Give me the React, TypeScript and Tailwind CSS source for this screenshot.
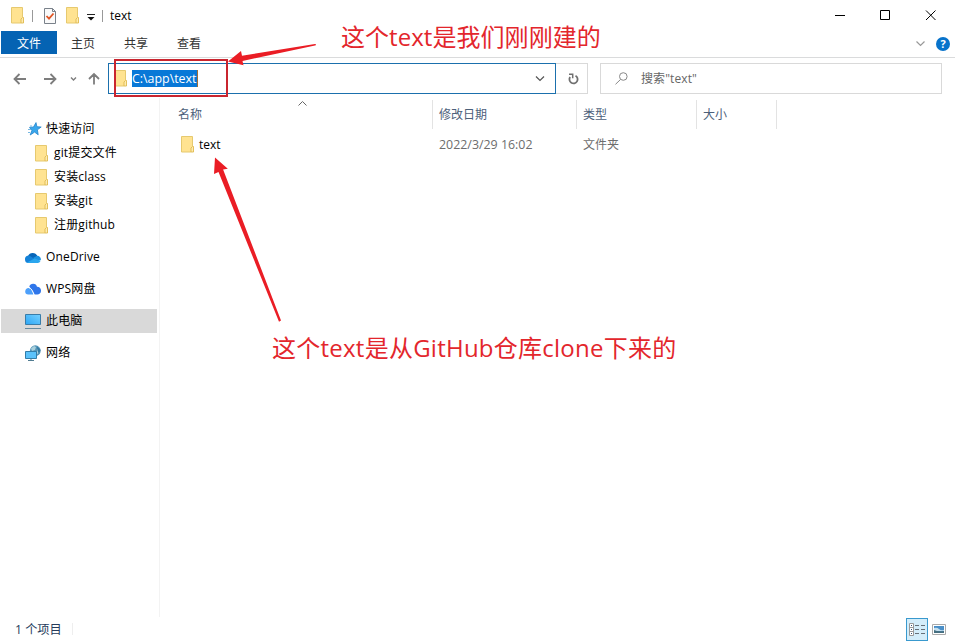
import type { ReactNode } from "react";

const uiFont = "font-['Open_Sans','Noto_Sans_CJK_SC',sans-serif]";

function Folder() {
  return (
    <svg width="14" height="17" viewBox="0 0 14 17" className="block shrink-0">
      <path d="M1.500.5h11v10h1v5.500h-12z" fill="#ffe391" />
      <path d="M12.500 10V.5h-11V16H11" fill="none" stroke="#e6c96f" />
      <path d="M11 16v-4l1.500-1.500h1V16z" fill="#ffebb0" stroke="#dfba50" strokeWidth=".9" />
    </svg>
  );
}

function Star() {
  return (
    <svg width="15" height="14" viewBox="0 0 15 14" className="block">
      <path d="M9 .6 9.900 4.700l4.300.3-3.800 2.800.8 5-3.600-2.700L3.200 13l1.700-4.500L2.500 5.400l4-.4z" fill="#39a7ec" stroke="#2384cb" strokeWidth=".8" />
      <path d="M3 4H5M1 7.500h3M1 10.500h2" stroke="#76b8e2" strokeWidth="1" />
    </svg>
  );
}

function OneDrive() {
  return (
    <svg width="16" height="11" viewBox="0 0 16 11" className="block">
      <path d="M3 4.200A5 5 0 0 1 12.300 4L9 7 2 8z" fill="#0765b8" />
      <path d="M0 7.500A3.500 3.500 0 0 1 5.500 4.200L11 8 3.500 11A3.500 3.500 0 0 1 0 7.500z" fill="#1482d8" />
      <path d="M8 6l4-2.200A3.600 3.600 0 0 1 15.800 8L12 9z" fill="#1a90e0" />
      <path d="M2 10.600 9.500 6.500 15.600 8.800A3 3 0 0 1 13 11H3.500z" fill="#2aa6ee" />
    </svg>
  );
}

function Wps() {
  return (
    <svg width="16" height="12" viewBox="0 0 16 12" className="block">
      <path d="M4.300 3.500A4 4 0 0 1 12 3.800 3.800 3.800 0 0 1 16 7.700 3.700 3.700 0 0 1 12 11.500H9.500z" fill="#2f76ea" />
      <path d="M.2 8.500A3.700 3.700 0 0 1 3.700 5C6 5 7 7 8.500 11.500H3.200A3 3 0 0 1 .2 8.500z" fill="#4da0fb" />
      <path d="M3.600 4.600C6.500 5 7.500 8 9.200 11.700" stroke="#fff" strokeWidth="1" fill="none" />
    </svg>
  );
}

function Computer() {
  return (
    <svg width="16" height="15" viewBox="0 0 16 15" className="block">
      <defs>
        <linearGradient id="screen" x1="0" y1="1" x2="1" y2="0">
          <stop stopColor="#2ba6f5" />
          <stop offset="1" stopColor="#75d0ff" />
        </linearGradient>
      </defs>
      <path d="M.5.5h15v10H.5z" fill="url(#screen)" stroke="#397ca8" />
      <path d="M0 14.500h16" stroke="#668a9f" />
    </svg>
  );
}

function Network() {
  return (
    <svg width="16" height="16" viewBox="0 0 16 16" className="block">
      <circle cx="10.300" cy="5.700" r="5.400" fill="#5595b8" />
      <path d="M6 3.500 9 1l2 1-1 3-3 1zM12 4l2.500 1v3L12 9z" fill="#a9d0dc" />
      <path d="M12 1.200 15.500 5 14 9.500l-1.500-4z" fill="#327aa3" />
      <path d="M.5 6.500h11v7H.5z" fill="#5bc2fb" stroke="#327da9" />
      <path d="M6 13.500v2M3 15.500h6" stroke="#517c91" />
    </svg>
  );
}

function NavRow({ icon, label, indent = false, active = false }: { icon: ReactNode; label: string; indent?: boolean; active?: boolean }) {
  return (
    <div className={`ml-px flex h-6 w-[156px] items-center ${indent ? "pl-[33px]" : "pl-6"} ${active ? "bg-[#d9d9d9]" : ""}`}>
      <span className={`flex shrink-0 ${indent ? "w-[20px]" : "w-[21px]"}`}>{icon}</span>
      <span className="whitespace-nowrap leading-6 tracking-[0.15px]">{label}</span>
    </div>
  );
}

function Chevron({ color = "#555", size = 9 }: { color?: string; size?: number }) {
  return (
    <svg width={size} height="6" viewBox="0 0 9 6" className="block">
      <path d="M.5.5l4 4 4-4" fill="none" stroke={color} strokeWidth="1.200" />
    </svg>
  );
}

function TitleBar() {
  return (
    <header className="flex h-[31px] items-center justify-between">
      <div className="flex h-full items-center pl-[10px]">
        <Folder />
        <span className="ml-[8px] mr-[11px] h-3 w-px bg-[#999]" />
        <svg width="12" height="16" viewBox="0 0 12 16">
          <path d="M.5.5h8l3 3v12H.5z" fill="#fafafa" stroke="#79818a" />
          <path d="M8.500.5v3h3" fill="none" stroke="#79818a" />
          <path d="M2.500 8 5 10.700 9.500 5.500" fill="none" stroke="#df5525" strokeWidth="1.800" />
        </svg>
        <span className="ml-[9px]"><Folder /></span>
        <svg width="8" height="7" viewBox="0 0 8 7" className="ml-[8px] mt-[3px]">
          <path d="M0 .5h8" stroke="#222" />
          <path d="M.5 3h7L4 6.500z" fill="#111" />
        </svg>
        <span className="ml-[7px] mr-[7px] h-3 w-px bg-[#999]" />
        <span className="leading-[30px]">text</span>
      </div>
      <svg width="104" height="31" viewBox="0 0 104 31" fill="none" stroke="#000" className="mr-[16px]">
        <path d="M0 15.500h10M45.500 10.500h9v9h-9zM91 10.500l9.500 9.500m0-9.500L91 20" />
      </svg>
    </header>
  );
}

function Ribbon() {
  return (
    <nav className="flex h-[27px] items-start border-b border-[#dadbdc] text-[#333]">
      <span className="ml-px h-[23px] w-14 bg-[#0563b3] text-center leading-[25px] text-white">文件</span>
      <span className="ml-[14px] leading-[25px]">主页</span>
      <span className="ml-[29px] leading-[25px]">共享</span>
      <span className="ml-[29px] leading-[25px]">查看</span>
      <div className="ml-auto flex h-[26px] items-center pr-[5px]">
        <Chevron color="#999" />
        <svg width="14" height="14" viewBox="0 0 14 14" className="ml-[11px]">
          <circle cx="7" cy="7" r="7" fill="#0873cb" />
          <text x="7" y="11" textAnchor="middle" fontSize="11" fontWeight="700" fill="#fff">?</text>
        </svg>
      </div>
    </nav>
  );
}

function AddressRow() {
  return (
    <div className="flex h-[40px] items-start pt-[5px]">
      <svg width="108" height="31" viewBox="0 0 108 31" fill="none" stroke="#7d7d7d" strokeWidth="1.800" className="shrink-0">
        <path d="M26 16H14.500m5-5-5 5 5 5M44 16h11.500m-5-5 5 5-5 5M94 21.500V11m-5 5 5-5 5 5" />
        <path d="M71 14.500l2.500 2.500 2.500-2.500" strokeWidth="1.400" />
      </svg>
      <div className="flex h-[31px] w-[448px] items-center border border-[#1b70ad] pl-[4px] pr-[10px]">
        <Folder />
        <span className="ml-[5px] h-[17px] w-[66px] whitespace-nowrap border-r border-[#a06e35] bg-[#0878d7] text-[12.400px] leading-[18px] text-white">C:\app\text</span>
        <span className="ml-auto"><Chevron size={10} /></span>
      </div>
      <div className="flex h-[31px] w-8 items-center justify-center border border-l-0 border-[#d9d9d9] pl-[3px]">
        <svg width="11" height="12" viewBox="0 0 11 12" fill="none" stroke="#707070" strokeWidth="1.800">
          <path d="M7.500 2.700A4.100 4.100 0 1 1 2.100 4" />
          <path d="M1 1.300H4.700V5.300" strokeWidth="1.500" />
        </svg>
      </div>
      <div className="ml-3 flex h-[31px] w-[342px] items-center border border-[#d9d9d9] pl-[14px] text-[#666]">
        <svg width="13" height="13" viewBox="0 0 13 13" fill="none" stroke="#888">
          <circle cx="8.300" cy="4.500" r="3.800" />
          <path d="M5.500 7.500.5 12.300" />
        </svg>
        <span className="ml-[13px] tracking-[0.100px]">搜索"text"</span>
      </div>
    </div>
  );
}

function Sidebar() {
  return (
    <aside className="h-full w-40 shrink-0 border-r border-[#f3f3f3] pt-[19px]">
      <NavRow icon={<span className="ml-[2px]"><Star /></span>} label="快速访问" />
      <NavRow indent icon={<Folder />} label="git提交文件" />
      <NavRow indent icon={<Folder />} label="安装class" />
      <NavRow indent icon={<Folder />} label="安装git" />
      <NavRow indent icon={<Folder />} label="注册github" />
      <div className="mt-2 flex flex-col gap-2">
        <NavRow icon={<OneDrive />} label="OneDrive" />
        <NavRow icon={<Wps />} label="WPS网盘" />
        <NavRow active icon={<Computer />} label="此电脑" />
        <NavRow icon={<Network />} label="网络" />
      </div>
    </aside>
  );
}

function FileList() {
  return (
    <main className="min-w-0 flex-1">
      <div className="flex pt-[2px] leading-[29px] text-[#4c607a]">
        <div className="relative h-[29px] w-[273px] border-r border-[#e3e3e3] pl-[18px]">
          名称
          <svg width="9" height="5" viewBox="0 0 9 5" className="absolute left-[138px] top-px">
            <path d="M.5 4.500l4-4 4 4" fill="none" stroke="#666" />
          </svg>
        </div>
        <div className="w-36 border-r border-[#e3e3e3] pl-[6px]">修改日期</div>
        <div className="w-[120px] border-r border-[#e3e3e3] pl-[6px]">类型</div>
        <div className="w-20 border-r border-[#e3e3e3] pl-[6px]">大小</div>
      </div>
      <div className="flex h-[31px] items-center pl-5 text-[#6d6d6d]">
        <Folder />
        <span className="ml-[5px] w-[240px] text-black">text</span>
        <span className="w-36 pt-px text-[12.400px]">2022/3/29 16:02</span>
        <span className="pt-px">文件夹</span>
      </div>
    </main>
  );
}

function StatusBar() {
  return (
    <footer className="flex h-[25px] items-center justify-between text-[#253b5b]">
      <div className="flex items-center pl-[15px]">
        <span className="w-[57px] whitespace-pre pt-px text-[12.200px]">1 个项目</span>
        <span className="h-3 w-px bg-[#eee]" />
      </div>
      <div className="flex items-center pr-[9px]">
        <span className="flex h-[23px] w-[22px] items-center justify-center border border-[#3999ce] bg-[#d3edfa]">
          <svg width="16" height="13" viewBox="0 0 16 13" fill="none">
            <path d="M.5.5h4v12h-4zM.5 4.500h4M.5 8.500h4" stroke="#999" fill="#fff" />
            <path d="M2 2.500h1M2 6.500h1M2 10.500h1" stroke="#357" />
            <path d="M6 2.500h4m2 0h4M6 6.500h4m2 0h4M6 10.500h4m2 0h4" stroke="#667078" />
          </svg>
        </span>
        <svg width="14" height="11" viewBox="0 0 14 11" className="ml-1">
          <path d="M.5.5h13v10H.5z" fill="#fff" stroke="#aaa" />
          <path d="M2 2h10v7H2z" fill="#4a8fc8" />
          <path d="M2 4q3-1 5 1t5 1v1H2z" fill="#c4e0f0" />
          <path d="M2 6q4 2 10 1v2H2z" fill="#456f80" />
        </svg>
      </div>
    </footer>
  );
}

export default function App() {
  return (
    <div className={`relative flex h-[642px] w-[955px] flex-col overflow-hidden bg-white text-[12px] leading-normal text-black ${uiFont}`}>
      <TitleBar />
      <Ribbon />
      <AddressRow />
      <div className="flex h-[519px]">
        <Sidebar />
        <FileList />
      </div>
      <StatusBar />
      <div className="absolute left-[114px] top-[59px] h-[38px] w-[114px] border-2 border-[#c9252f]" />
      <svg width="955" height="642" viewBox="0 0 955 642" className="pointer-events-none absolute left-0 top-0" fill="#ea1d25">
        <path d="M228 61.500 241 51l1 4.800L315 44q2 .5 0 1.500L242.500 61l1 4.300z" />
        <path d="M215 157.500l12.800 11.200-4.700.8L281 320.500l-2 1.300L218.500 172l-4.500 2z" />
      </svg>
      <div className="absolute left-[341px] top-[19px] whitespace-nowrap text-[24px] leading-[36px] tracking-[0.050px] text-[#e3262c]">这个text是我们刚刚建的</div>
      <div className="absolute left-[272px] top-[330px] whitespace-nowrap text-[24px] leading-[36px] tracking-[0.250px] text-[#e3262c]">这个text是从GitHub仓库clone下来的</div>
    </div>
  );
}
